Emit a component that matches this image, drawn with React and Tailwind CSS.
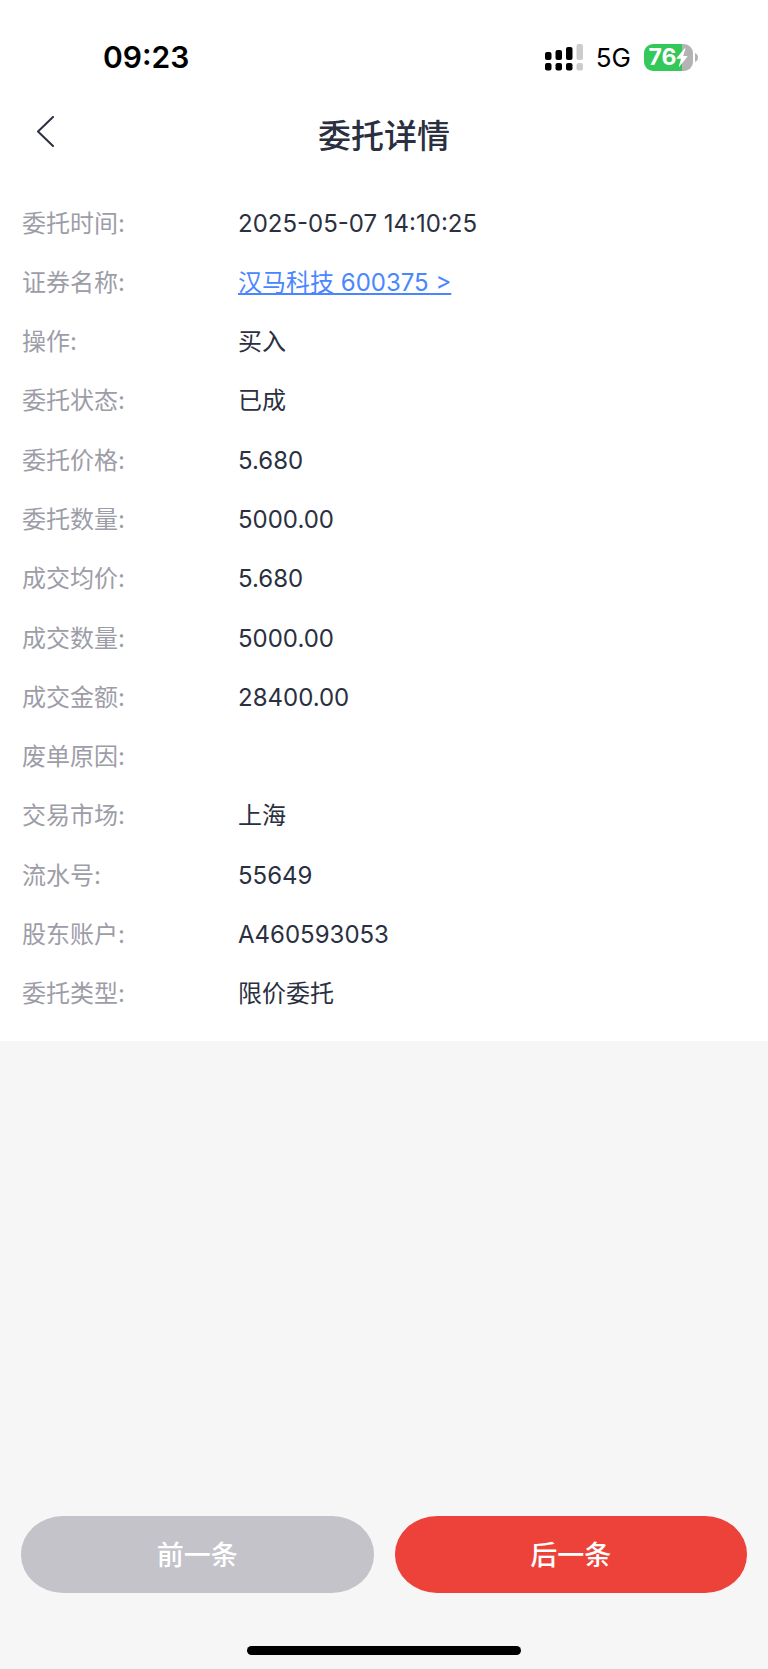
import React from "react";

const orderDetails = [
  { label: "委托时间", value: "2025-05-07 14:10:25" },
  { label: "证券名称", value: "汉马科技 600375 >", link: "#600375" },
  { label: "操作", value: "买入" },
  { label: "委托状态", value: "已成" },
  { label: "委托价格", value: "5.680" },
  { label: "委托数量", value: "5000.00" },
  { label: "成交均价", value: "5.680" },
  { label: "成交数量", value: "5000.00" },
  { label: "成交金额", value: "28400.00" },
  { label: "废单原因", value: "" },
  { label: "交易市场", value: "上海" },
  { label: "流水号", value: "55649" },
  { label: "股东账户", value: "A460593053" },
  { label: "委托类型", value: "限价委托" },
];

function SignalIcon() {
  return (
    <svg width="38" height="27" viewBox="0 0 38 27" aria-hidden="true">
      <rect x="0" y="8" width="6.5" height="8" rx="2" fill="#000" />
      <rect x="10.5" y="6" width="6.5" height="10" rx="2" fill="#000" />
      <rect x="21" y="3" width="6.5" height="13" rx="2" fill="#000" />
      <rect x="31.5" y="0" width="6.5" height="16" rx="2" fill="#ccc" />
      <rect x="0" y="19" width="6.5" height="7.5" rx="2" fill="#000" />
      <rect x="10.5" y="19" width="6.5" height="7.5" rx="2" fill="#000" />
      <rect x="21" y="19" width="6.5" height="7.5" rx="2" fill="#000" />
      <rect x="31.5" y="19" width="6.5" height="7.5" rx="2" fill="#ccc" />
    </svg>
  );
}

function Battery() {
  return (
    <div className="flex items-center gap-[2px]">
      <div className="flex h-[27px] w-[49px] items-center justify-center rounded-[9px] bg-linear-to-r from-[#34c759] from-78% to-[#b3b3b3] to-78% text-white">
        <span className="text-[23px] leading-[27px] font-bold">76</span>
        <svg width="12" height="19" viewBox="0 0 12 19" aria-hidden="true">
          <path
            d="M8.6 0.4 L0.6 10 Q0.2 10.8 1 10.8 H5 L2.8 18.2 Q2.8 19 3.5 18.5 L11.4 8.8 Q11.8 8 11 8 H7.2 L9.4 0.9 Q9.4 0 8.6 0.4 Z"
            fill="#fff"
          />
        </svg>
      </div>
      <svg width="3" height="9" viewBox="0 0 3 9" aria-hidden="true">
        <path d="M0 0 Q3 1.2 3 4.5 Q3 7.8 0 9 Z" fill="#b3b3b3" />
      </svg>
    </div>
  );
}

function StatusBar() {
  return (
    <div className="flex h-[92px] items-center justify-between pt-[22px] pr-[70px] pl-[103px] text-black">
      <span className="text-[30px] leading-[36px] font-semibold">09:23</span>
      <div className="flex items-center gap-[13px]">
        <SignalIcon />
        <span className="pt-[2px] text-[26px] leading-[30px]">5G</span>
        <Battery />
      </div>
    </div>
  );
}

function App() {
  return (
    <div className="flex min-h-screen flex-col bg-[#f6f6f6] font-['Inter','Noto_Sans_CJK_SC',sans-serif] text-[#2a3040]">
      <div className="bg-white pb-[17px]">
        <StatusBar />
        <header className="grid h-[102px] grid-cols-[1fr_auto_1fr] items-start px-[35px]">
          <button
            type="button"
            aria-label="返回"
            className="flex h-[80px] w-[40px] items-center"
          >
            <svg
              width="20"
              height="32"
              viewBox="0 0 20 32"
              fill="none"
              stroke="currentColor"
              strokeWidth="2"
              strokeLinecap="round"
              strokeLinejoin="round"
              aria-hidden="true"
            >
              <path d="M18 1 L3 15.5 L18 30" />
            </svg>
          </button>
          <h1 className="text-[33px] leading-[88px] font-medium">委托详情</h1>
        </header>

        <dl className="grid min-h-[830px] auto-rows-fr px-[22px] text-[24px] leading-[36px]">
          {orderDetails.map((item) => (
            <div key={item.label} className="flex items-center">
              <dt className="w-[216px] shrink-0 text-[#9d9da8]">
                {item.label}:
              </dt>
              <dd>
                {item.link ? (
                  <a
                    href={item.link}
                    className="text-[#4a86ff] underline decoration-2 underline-offset-2"
                  >
                    {item.value}
                  </a>
                ) : (
                  item.value
                )}
              </dd>
            </div>
          ))}
        </dl>
      </div>

      <footer className="mt-auto px-[21px] pb-[14px]">
        <div className="grid grid-cols-2 gap-[21px] text-[27px] leading-[36px] font-medium text-white">
          <button
            type="button"
            className="h-[77px] rounded-[42px/38px] bg-[#c3c3c9] pt-[3px]"
          >
            前一条
          </button>
          <button
            type="button"
            className="h-[77px] rounded-[42px/38px] bg-[#ed423a] pt-[3px]"
          >
            后一条
          </button>
        </div>
        <div className="mx-auto mt-[53px] h-[9px] w-[274px] rounded-full bg-black" />
      </footer>
    </div>
  );
}

export default App;
